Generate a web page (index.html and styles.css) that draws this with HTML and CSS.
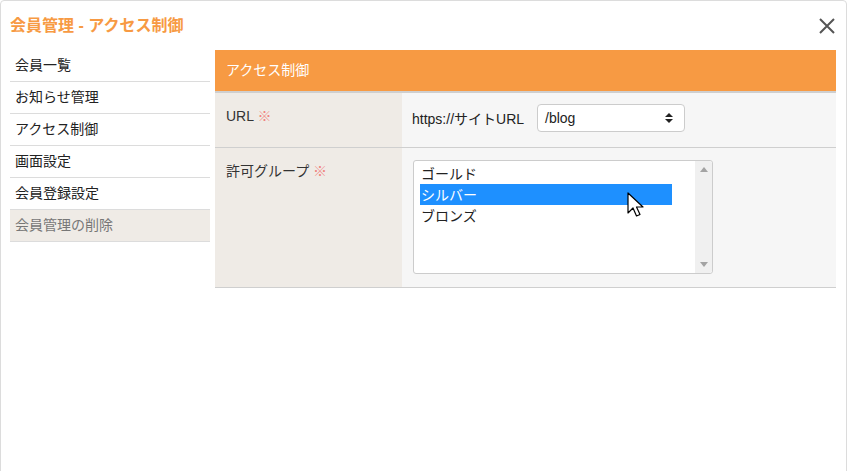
FILE: index.html
```html
<!DOCTYPE html>
<html>
<head>
  <meta charset="utf-8">
  <title>会員管理 - アクセス制御</title>
  <link rel="stylesheet" href="styles.css">
</head>
<body>
  <div class="dialog">
    <div class="dialog-head">
      <h1>会員管理 - アクセス制御</h1>
      <span class="close">
        <svg width="18" height="18" viewBox="0 0 18 18"><path d="M2 2 L16 16 M16 2 L2 16" stroke="#555" stroke-width="2" fill="none"/></svg>
      </span>
    </div>

    <div class="dialog-body">
      <ul class="side-nav">
        <li>会員一覧</li>
        <li>お知らせ管理</li>
        <li>アクセス制御</li>
        <li>画面設定</li>
        <li>会員登録設定</li>
        <li class="muted">会員管理の削除</li>
      </ul>

      <div class="panel">
        <div class="panel-title">アクセス制御</div>
        <table class="form-table">
          <tr class="row-url">
            <th>URL <span class="req">※</span></th>
            <td>
              <div class="url-field">
                <span>https://サイトURL</span>
                <div class="select-box">
                  <span>/blog</span>
                  <svg width="10" height="12" viewBox="0 0 10 12"><path d="M5 1 L9 5 H1 Z M5 11 L9 7 H1 Z" fill="#222"/></svg>
                </div>
              </div>
            </td>
          </tr>
          <tr class="row-group">
            <th>許可グループ <span class="req">※</span></th>
            <td>
              <div class="listbox">
                <ul class="options">
                  <li>ゴールド</li>
                  <li class="selected">シルバー</li>
                  <li>ブロンズ</li>
                </ul>
                <div class="scrollbar">
                  <svg width="8" height="5" viewBox="0 0 8 5"><path d="M0 5 L4 0 L8 5 Z" fill="#a3a3a3"/></svg>
                  <svg width="8" height="5" viewBox="0 0 8 5"><path d="M0 0 L4 5 L8 0 Z" fill="#a3a3a3"/></svg>
                </div>
                <svg class="cursor" width="20" height="28" viewBox="0 0 20 28"><path d="M1 1 L1 21 L6 16 L9.5 24 L13 22.5 L9.5 15 L16 15 Z" fill="#fff" stroke="#000" stroke-width="1.2" stroke-linejoin="round"/></svg>
              </div>
            </td>
          </tr>
        </table>
      </div>
    </div>
  </div>
</body>
</html>
```

FILE: styles.css
```css
/* Base */
body {
  margin: 0;
  padding: 0;
  background-color: #fff;
  font-family: "Liberation Sans", Arial, "Noto Sans CJK JP", sans-serif;
  font-size: 14px;
  color: #333;
}

.dialog {
  width: 847px;
  height: 475px;
  border: 1px solid #dcdcdc;
  border-radius: 4px 4px 0 0;
  box-sizing: border-box;
  background: #fff;
}

/* Header */
.dialog-head {
  display: flex;
  justify-content: space-between;
  align-items: center;
  height: 46px;
  padding: 0 10px 0 9px;
}

.dialog-head h1 {
  margin: 0;
  font-size: 16px;
  font-weight: bold;
  color: #f79a43;
}

.close {
  display: flex;
  margin-top: 3px;
}

/* Body */
.dialog-body {
  display: flex;
  padding: 3px 10px 0 9px;
}

.side-nav {
  list-style: none;
  margin: 0;
  padding: 0;
  width: 200px;
  flex-shrink: 0;
}

.side-nav li {
  height: 31px;
  line-height: 30px;
  padding-left: 5px;
  border-bottom: 1px solid #dcdcdc;
  color: #222;
}

.side-nav li.muted {
  background-color: #efebe6;
  color: #777;
}

.panel {
  flex: 1;
  margin-left: 5px;
}

.panel-title {
  height: 41px;
  line-height: 40px;
  padding-left: 11px;
  background-color: #f79a43;
  color: #fff;
  border-bottom: 2px solid #cfcfcf;
}

/* Form table */
.form-table {
  width: 100%;
  border-collapse: collapse;
}

.form-table th {
  width: 187px;
  background-color: #efebe6;
  text-align: left;
  vertical-align: top;
  font-weight: normal;
  padding: 12px 11px 0 11px;
  box-sizing: border-box;
  color: #333;
  border-bottom: 1px solid #cfcfcf;
}

.form-table td {
  background-color: #f6f6f6;
  vertical-align: top;
  padding: 0 10px;
  border-bottom: 1px solid #cfcfcf;
}

.req {
  color: #f0837f;
}

.row-url th,
.row-url td {
  height: 54px;
}

.row-group th,
.row-group td {
  height: 139px;
}

.url-field {
  display: flex;
  align-items: center;
  gap: 13px;
  margin-top: 11px;
  color: #222;
}

.select-box {
  display: flex;
  justify-content: space-between;
  align-items: center;
  width: 148px;
  height: 28px;
  padding: 0 10px 0 7px;
  box-sizing: border-box;
  background: #fff;
  border: 1px solid #ccc;
  border-radius: 4px;
}

/* Listbox */
.listbox {
  position: relative;
  display: flex;
  width: 300px;
  height: 114px;
  margin: 12px 0 0 1px;
  box-sizing: border-box;
  background: #fff;
  border: 1px solid #ccc;
  border-radius: 3px;
}

.options {
  list-style: none;
  margin: 0;
  padding: 2px 0 0 6px;
  width: 252px;
  font-family: "Noto Sans CJK JP", sans-serif;
  color: #222;
}

.options li {
  height: 21px;
  line-height: 21px;
  padding-left: 1px;
}

.options li.selected {
  background-color: #1e90ff;
  color: #fff;
}

.scrollbar {
  margin-left: auto;
  width: 17px;
  display: flex;
  flex-direction: column;
  justify-content: space-between;
  align-items: center;
  padding: 6px 0;
  background-color: #f0f0f0;
  border-radius: 0 3px 3px 0;
}

.cursor {
  position: absolute;
  left: 213px;
  top: 31px;
}
```
